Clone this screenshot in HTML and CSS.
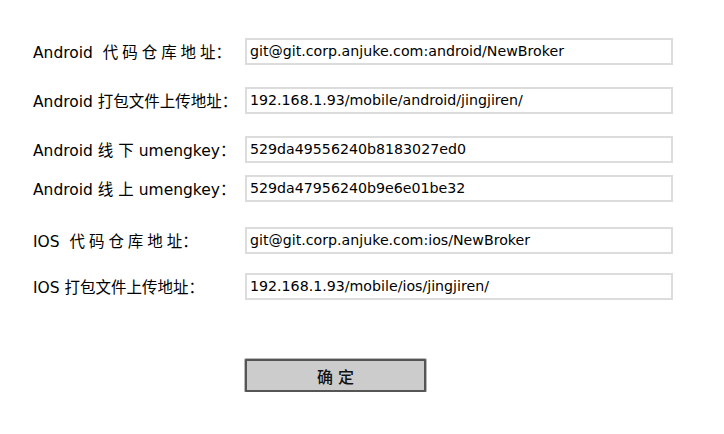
FILE: index.html
```html
<!DOCTYPE html>
<html lang="zh">
<head>
<meta charset="utf-8">
<title>配置</title>
<link rel="stylesheet" href="styles.css">
</head>
<body>
<form class="form">
  <div class="row">
    <label class="label">Android <span class="spaced">代 码 仓 库 地 址：</span></label>
    <input class="field" type="text" value="git@git.corp.anjuke.com:android/NewBroker">
  </div>
  <div class="row gap-md">
    <label class="label">Android 打包文件上传地址：</label>
    <input class="field" type="text" value="192.168.1.93/mobile/android/jingjiren/">
  </div>
  <div class="row gap-md">
    <label class="label">Android 线 下 umengkey：</label>
    <input class="field" type="text" value="529da49556240b8183027ed0">
  </div>
  <div class="row gap-sm">
    <label class="label">Android 线 上 umengkey：</label>
    <input class="field" type="text" value="529da47956240b9e6e01be32">
  </div>
  <div class="row gap-lg">
    <label class="label">IOS <span class="spaced">代 码 仓 库 地 址：</span></label>
    <input class="field" type="text" value="git@git.corp.anjuke.com:ios/NewBroker">
  </div>
  <div class="row gap-mid">
    <label class="label">IOS 打包文件上传地址：</label>
    <input class="field" type="text" value="192.168.1.93/mobile/ios/jingjiren/">
  </div>
  <div class="actions">
    <button class="submit" type="button">确 定</button>
  </div>
</form>
</body>
</html>
```
FILE: styles.css
```css
html, body {
  margin: 0;
  padding: 0;
  background: #ffffff;
}

body {
  font-family: "DejaVu Sans", "Noto Sans CJK SC", sans-serif;
  color: #000000;
}

.form {
  display: flex;
  flex-direction: column;
  padding: 38px 0 0 33px;
}

.row {
  display: flex;
  align-items: center;
  height: 26px;
}

.gap-md { margin-top: 23px; }
.gap-sm { margin-top: 13px; }
.gap-lg { margin-top: 26px; }
.gap-mid { margin-top: 20px; }

.label {
  width: 212px;
  flex: none;
  font-size: 15.5px;
  white-space: nowrap;
  color: #000000;
}

.spaced {
  margin-left: 5px;
  word-spacing: -1px;
}

.field {
  box-sizing: border-box;
  width: 428px;
  height: 27px;
  margin: 0;
  padding: 0 0 0 3px;
  border: 2px solid #dcdcdc;
  background: #ffffff;
  font-family: "DejaVu Sans", "Noto Sans CJK SC", sans-serif;
  font-size: 14.2px;
  color: #000000;
  outline: none;
}

.actions {
  display: flex;
  padding-left: 212px;
  margin-top: 60px;
}

.submit {
  box-sizing: border-box;
  width: 181px;
  height: 33px;
  margin: 0;
  padding: 0;
  border: 2px solid #555555;
  border-radius: 1px;
  box-shadow: 0 0 0 1px #b8b8b8;
  background: #cccccc;
  font-family: "DejaVu Sans", "Noto Sans CJK SC", sans-serif;
  font-size: 16px;
  font-weight: 500;
  color: #111111;
}
```
